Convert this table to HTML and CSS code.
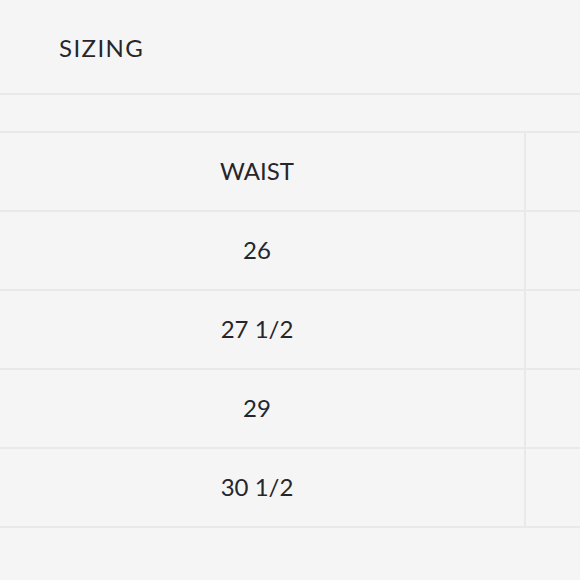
FILE: index.html
```html
<!DOCTYPE html>
<html>
<head>
<meta charset="utf-8">
<link rel="stylesheet" href="styles.css">
</head>
<body>
<div class="page">
  <div class="title-bar"><h2 class="title">SIZING</h2></div>
  <div class="spacer"></div>
  <div class="table-wrap">
    <div class="size-table">
      <div class="cell head">WAIST</div><div class="cell side"></div>
      <div class="cell">26</div><div class="cell side"></div>
      <div class="cell">27 1/2</div><div class="cell side"></div>
      <div class="cell">29</div><div class="cell side"></div>
      <div class="cell">30 1/2</div><div class="cell side"></div>
    </div>
  </div>
</div>
</body>
</html>
```
FILE: styles.css
```css
html, body {
  margin: 0;
  padding: 0;
  background: #f5f5f5;
}
body {
  font-family: "Lato", "Open Sans", sans-serif;
  color: #26262b;
  width: 580px;
  height: 580px;
  overflow: hidden;
}
.title-bar {
  height: 95px;
  box-sizing: border-box;
  border-bottom: 2px solid #e9e9e9;
  display: flex;
  align-items: center;
  padding-left: 59px;
}
.title {
  margin: 0;
  font-weight: 400;
  font-size: 24px;
  letter-spacing: 1.4px;
  padding-top: 2px;
}
.spacer {
  height: 36px;
}
.table-wrap {
  overflow: hidden;
  border-top: 2px solid #e9e9e9;
}
.size-table {
  display: grid;
  grid-template-columns: 524px 200px;
}
.cell {
  height: 77px;
  box-sizing: border-box;
  height: 79px;
  border-bottom: 2px solid #e9e9e9;
  display: flex;
  align-items: center;
  justify-content: center;
  padding: 0 10px 3px 0;
  font-size: 24px;
}
.side {
  border-left: 2px solid #e9e9e9;
  padding-right: 0;
}
```
